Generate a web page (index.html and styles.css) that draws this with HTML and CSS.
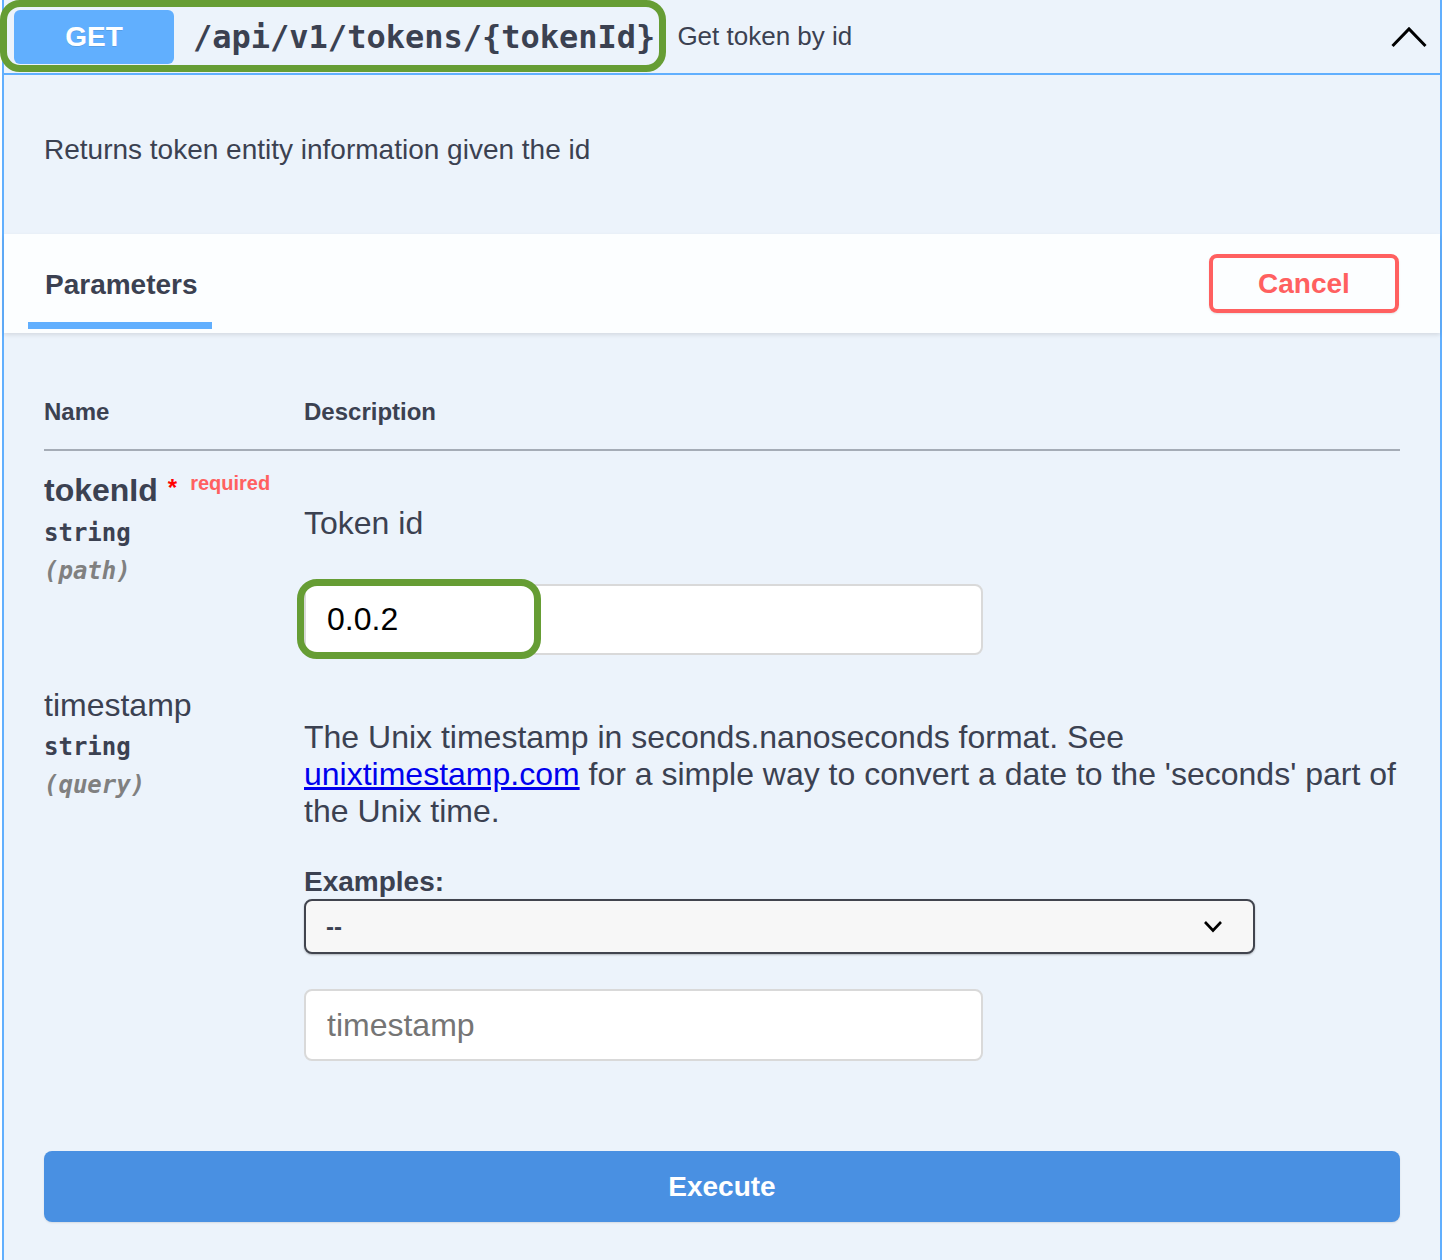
FILE: index.html
```html
<!DOCTYPE html>
<html>
<head>
<meta charset="utf-8">
<link rel="stylesheet" href="styles.css">
</head>
<body>
<div class="opblock">
  <div class="summary">
    <div class="summary-hl"></div>
    <span class="method">GET</span>
    <span class="path">/api/v1/tokens/{tokenId}</span>
    <span class="summary-desc">Get token by id</span>
    <svg class="chev-up" width="36" height="22" viewBox="0 0 36 22"><polyline points="1.5,20 18,3 34.5,20" fill="none" stroke="#000" stroke-width="3"/></svg>
  </div>
  <div class="op-desc">Returns token entity information given the id</div>
  <div class="tab-header">
    <div class="tab">
      <div class="tab-label">Parameters</div>
      <div class="tab-line"></div>
    </div>
    <button class="btn-cancel">Cancel</button>
  </div>
  <div class="params">
    <div class="table-head">
      <div class="col-name">Name</div>
      <div class="col-desc">Description</div>
    </div>
    <div class="row row-first">
      <div class="col-name">
        <div class="pname"><span class="pname-text bold">tokenId</span><span class="star">*</span><span class="req">required</span></div>
        <div class="ptype">string</div>
        <div class="pin">(path)</div>
      </div>
      <div class="col-desc">
        <div class="pdesc">Token id</div>
        <div class="input-wrap">
          <input class="text-input" type="text" value="0.0.2">
          <div class="input-hl"></div>
        </div>
      </div>
    </div>
    <div class="row row-second">
      <div class="col-name">
        <div class="pname"><span class="pname-text">timestamp</span></div>
        <div class="ptype">string</div>
        <div class="pin">(query)</div>
      </div>
      <div class="col-desc">
        <div class="pdesc long">The Unix timestamp in seconds.nanoseconds format. See <a href="#" class="link">unixtimestamp.com</a> for a simple way to convert a date to the 'seconds' part of the Unix time.</div>
        <div class="examples-label">Examples:</div>
        <div class="select">
          <span class="select-val">--</span>
          <svg width="20" height="13" viewBox="0 0 20 13"><polyline points="2,2 10,10.5 18,2" fill="none" stroke="#000" stroke-width="2.6"/></svg>
        </div>
        <input class="text-input second" type="text" placeholder="timestamp">
      </div>
    </div>
    <button class="btn-execute">Execute</button>
  </div>
</div>
</body>
</html>
```
FILE: styles.css
```css
html, body {
  margin: 0;
  padding: 0;
  background: #ffffff;
}
body {
  font-family: "Liberation Sans", Arial, sans-serif;
  color: #3b4151;
}
.opblock {
  margin-left: 2px;
  border: 2px solid #61affe;
  border-top: none;
  background: #ecf3fb;
  padding-bottom: 60px;
}
.summary {
  position: relative;
  display: flex;
  align-items: center;
  height: 73px;
  border-bottom: 2px solid #61affe;
  padding: 0 13px 0 10px;
}
.summary-hl {
  position: absolute;
  left: -4px;
  top: 0;
  width: 666px;
  height: 72px;
  box-sizing: border-box;
  border: 7px solid #669d34;
  border-radius: 20px;
  pointer-events: none;
}
.method {
  width: 160px;
  height: 54px;
  border-radius: 6px;
  background: #61affe;
  color: #fff;
  font-weight: bold;
  font-size: 28px;
  display: flex;
  align-items: center;
  justify-content: center;
  text-shadow: 0 1px 0 rgba(0,0,0,.1);
}
.path {
  font-family: "DejaVu Sans Mono", monospace;
  font-weight: bold;
  font-size: 32px;
  margin-left: 19px;
  color: #3b4151;
}
.summary-desc {
  flex: 1;
  font-size: 26px;
  margin-left: 22px;
  color: #3b4151;
}
.chev-up {
  display: block;
}
.op-desc {
  padding: 57px 40px 66px;
  font-size: 28px;
  line-height: 36px;
}
.tab-header {
  display: flex;
  justify-content: space-between;
  align-items: center;
  height: 99px;
  padding: 0 41px 0 24px;
  background: rgba(255,255,255,.85);
  box-shadow: 0 2px 4px rgba(0,0,0,.1);
}
.tab {
  align-self: stretch;
  display: flex;
  flex-direction: column;
  padding-top: 33px;
}
.tab-label {
  font-weight: bold;
  font-size: 28px;
  line-height: 36px;
  padding: 0 14px 0 17px;
}
.tab-line {
  margin-top: 19px;
  height: 7px;
  background: #61affe;
}
.btn-cancel {
  width: 190px;
  height: 59px;
  box-sizing: border-box;
  border: 4px solid #ff6060;
  border-radius: 8px;
  background: transparent;
  color: #ff6060;
  font-family: "Liberation Sans", Arial, sans-serif;
  font-weight: bold;
  font-size: 28px;
  box-shadow: 0 1px 2px rgba(0,0,0,.1);
}
.params {
  padding: 64px 40px 0;
}
.table-head {
  display: grid;
  grid-template-columns: 260px 1fr;
  font-weight: bold;
  font-size: 24px;
  line-height: 30px;
  padding-bottom: 22px;
  border-bottom: 2px solid rgba(59,65,81,.4);
}
.row {
  display: grid;
  grid-template-columns: 260px 1fr;
}
.row-first {
  padding-top: 20px;
}
.row-second {
  padding-top: 31px;
}
.pname {
  display: flex;
  align-items: flex-start;
}
.pname-text {
  font-size: 32px;
  line-height: 38px;
}
.pname-text.bold {
  font-weight: bold;
}
.star {
  color: #ff0000;
  font-size: 24px;
  font-weight: bold;
  line-height: 22px;
  margin-left: 10px;
  margin-top: 6px;
}
.req {
  color: #ff6060;
  font-size: 20px;
  font-weight: bold;
  line-height: 24px;
  margin-left: 13px;
  margin-top: 0px;
}
.ptype {
  font-family: "DejaVu Sans Mono", monospace;
  font-weight: bold;
  font-size: 24px;
  line-height: 30px;
  margin-top: 9px;
}
.row-second .ptype {
  margin-top: 8px;
}
.pin {
  font-family: "DejaVu Sans Mono", monospace;
  font-weight: bold;
  font-style: italic;
  font-size: 24px;
  line-height: 30px;
  margin-top: 8px;
  color: #808080;
}
.pdesc {
  margin-top: 33px;
  font-size: 32px;
  line-height: 38px;
}
.pdesc.long {
  line-height: 37px;
}
.link {
  color: #0000ee;
  text-decoration: underline;
}
.input-wrap {
  position: relative;
  margin-top: 42px;
  width: 679px;
}
.text-input {
  display: block;
  box-sizing: border-box;
  width: 679px;
  height: 71px;
  margin: 0;
  border: 2px solid #d9d9d9;
  border-radius: 8px;
  background: #fff;
  padding: 0 21px;
  font-family: "Liberation Sans", Arial, sans-serif;
  font-size: 32px;
  color: #000;
  outline: none;
}
.text-input::placeholder {
  color: #757575;
}
.text-input.second {
  margin-top: 35px;
  height: 72px;
}
.input-hl {
  position: absolute;
  left: -7px;
  top: -5px;
  width: 244px;
  height: 80px;
  box-sizing: border-box;
  border: 7px solid #669d34;
  border-radius: 20px;
  pointer-events: none;
}
.examples-label {
  margin-top: 35px;
  font-weight: bold;
  font-size: 28px;
  line-height: 34px;
}
.select {
  box-sizing: border-box;
  width: 951px;
  height: 55px;
  border: 2px solid #41444e;
  border-radius: 8px;
  background: #f7f7f7;
  box-shadow: 0 1px 2px rgba(0,0,0,.25);
  display: flex;
  align-items: center;
  justify-content: space-between;
  padding: 0 30px 0 20px;
}
.select-val {
  font-weight: bold;
  font-size: 24px;
  color: #3b4151;
}
.select svg {
  display: block;
}
.btn-execute {
  display: block;
  width: 100%;
  height: 71px;
  margin-top: 90px;
  border: none;
  border-radius: 8px;
  background: #4990e2;
  color: #fff;
  font-family: "Liberation Sans", Arial, sans-serif;
  font-weight: bold;
  font-size: 28px;
  box-shadow: 0 1px 2px rgba(0,0,0,.1);
}
```
